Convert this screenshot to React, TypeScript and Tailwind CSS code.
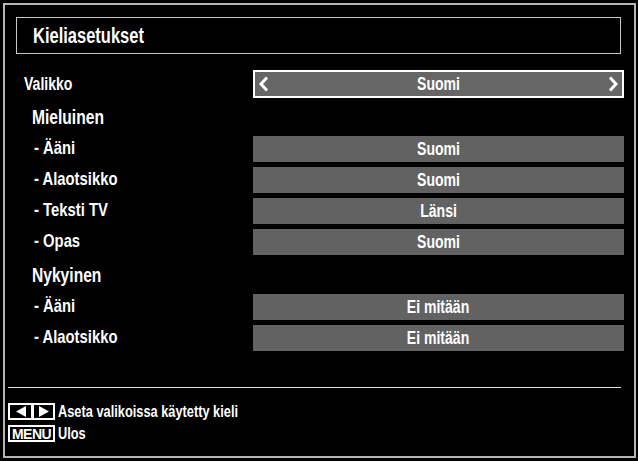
import React from "react";

const font = { fontFamily: '"Liberation Sans", Arial, sans-serif' } as const;

function Narrow({ children, center = false }: { children: React.ReactNode; center?: boolean }) {
  return (
    <span
      className={
        center
          ? "inline-block origin-center scale-x-[0.78] whitespace-nowrap"
          : "inline-block origin-left scale-x-[0.78] whitespace-nowrap"
      }
    >
      {children}
    </span>
  );
}

function Bar({ children }: { children: React.ReactNode }) {
  return (
    <div className="ml-auto mr-[10px] flex h-[26px] w-[371px] items-center justify-center bg-[#626262] text-[18px] font-bold leading-none text-white">
      <Narrow center>{children}</Narrow>
    </div>
  );
}

function SubRow({ label, value }: { label: string; value: string }) {
  return (
    <div className="mt-[5px] flex h-[26px] items-center">
      <span className="ml-[29px] -mt-[4px] text-[19px] font-bold leading-none text-white">
        <Narrow>{label}</Narrow>
      </span>
      <Bar>{value}</Bar>
    </div>
  );
}

function Header({ label }: { label: string }) {
  return (
    <div className="flex h-[26px] items-center">
      <span className="ml-[27px] -mt-[3px] text-[20px] font-bold leading-none text-white">
        <Narrow>{label}</Narrow>
      </span>
    </div>
  );
}

export default function App() {
  return (
    <div className="h-[461px] w-[638px] overflow-hidden bg-black pt-[3px] pl-[3px]" style={font}>
      <div className="flex h-[455px] w-[633px] flex-col border-2 border-[#b4b4b4]">
        <div className="ml-[11px] mr-[13px] mt-[12px] flex h-[37px] items-center border border-[#c8c8c8] pl-[16px]">
          <span className="inline-block origin-left scale-x-[0.75] whitespace-nowrap text-[22px] font-bold leading-none text-white">
            Kieliasetukset
          </span>
        </div>

        <div className="mt-[16px] flex h-[28px] items-center">
          <span className="ml-[19px] text-[18px] font-bold leading-none text-white">
            <Narrow>Valikko</Narrow>
          </span>
          <div className="ml-auto mr-[10px] flex h-[28px] w-[371px] items-center justify-between border-2 border-white bg-[#666666] px-[3px] text-white">
            <svg width="11" height="18" viewBox="0 0 11 18">
              <path d="M9 2.5 L3 9 L9 15.5" fill="none" stroke="white" strokeWidth="3" />
            </svg>
            <span className="text-[18px] font-bold leading-none">
              <Narrow center>Suomi</Narrow>
            </span>
            <svg width="11" height="18" viewBox="0 0 11 18">
              <path d="M2 2.5 L8 9 L2 15.5" fill="none" stroke="white" strokeWidth="3" />
            </svg>
          </div>
        </div>

        <div className="mt-[7px]">
          <Header label="Mieluinen" />
        </div>
        <SubRow label="- Ääni" value="Suomi" />
        <SubRow label="- Alaotsikko" value="Suomi" />
        <SubRow label="- Teksti TV" value="Länsi" />
        <SubRow label="- Opas" value="Suomi" />

        <div className="mt-[8px]">
          <Header label="Nykyinen" />
        </div>
        <SubRow label="- Ääni" value="Ei mitään" />
        <SubRow label="- Alaotsikko" value="Ei mitään" />

        <div className="ml-[3px] mr-[13px] mt-[36px] h-px bg-[#e0e0e0]" />

        <div className="ml-[3px] mt-[15px] flex flex-col gap-[5px]">
          <div className="flex items-center gap-[3px]">
            <div className="flex h-[17px] w-[47px] items-center border-2 border-white">
              <div className="flex w-[21px] justify-center">
                <svg width="10" height="11" viewBox="0 0 10 11"><path d="M10 0 L0 5.5 L10 11 Z" fill="white" /></svg>
              </div>
              <div className="h-full w-[3px] bg-white" />
              <div className="flex w-[19px] justify-center">
                <svg width="10" height="11" viewBox="0 0 10 11"><path d="M0 0 L10 5.5 L0 11 Z" fill="white" /></svg>
              </div>
            </div>
            <span className="inline-block origin-left scale-x-[0.8] whitespace-nowrap text-[16px] font-bold leading-none text-white">
              Aseta valikoissa käytetty kieli
            </span>
          </div>
          <div className="flex items-center gap-[3px]">
            <div className="flex h-[17px] w-[47px] items-center justify-center border-2 border-white text-[14px] font-bold leading-none tracking-[-0.5px] text-white">
              MENU
            </div>
            <span className="inline-block origin-left scale-x-[0.8] whitespace-nowrap text-[16px] font-bold leading-none text-white">
              Ulos
            </span>
          </div>
        </div>
      </div>
    </div>
  );
}
